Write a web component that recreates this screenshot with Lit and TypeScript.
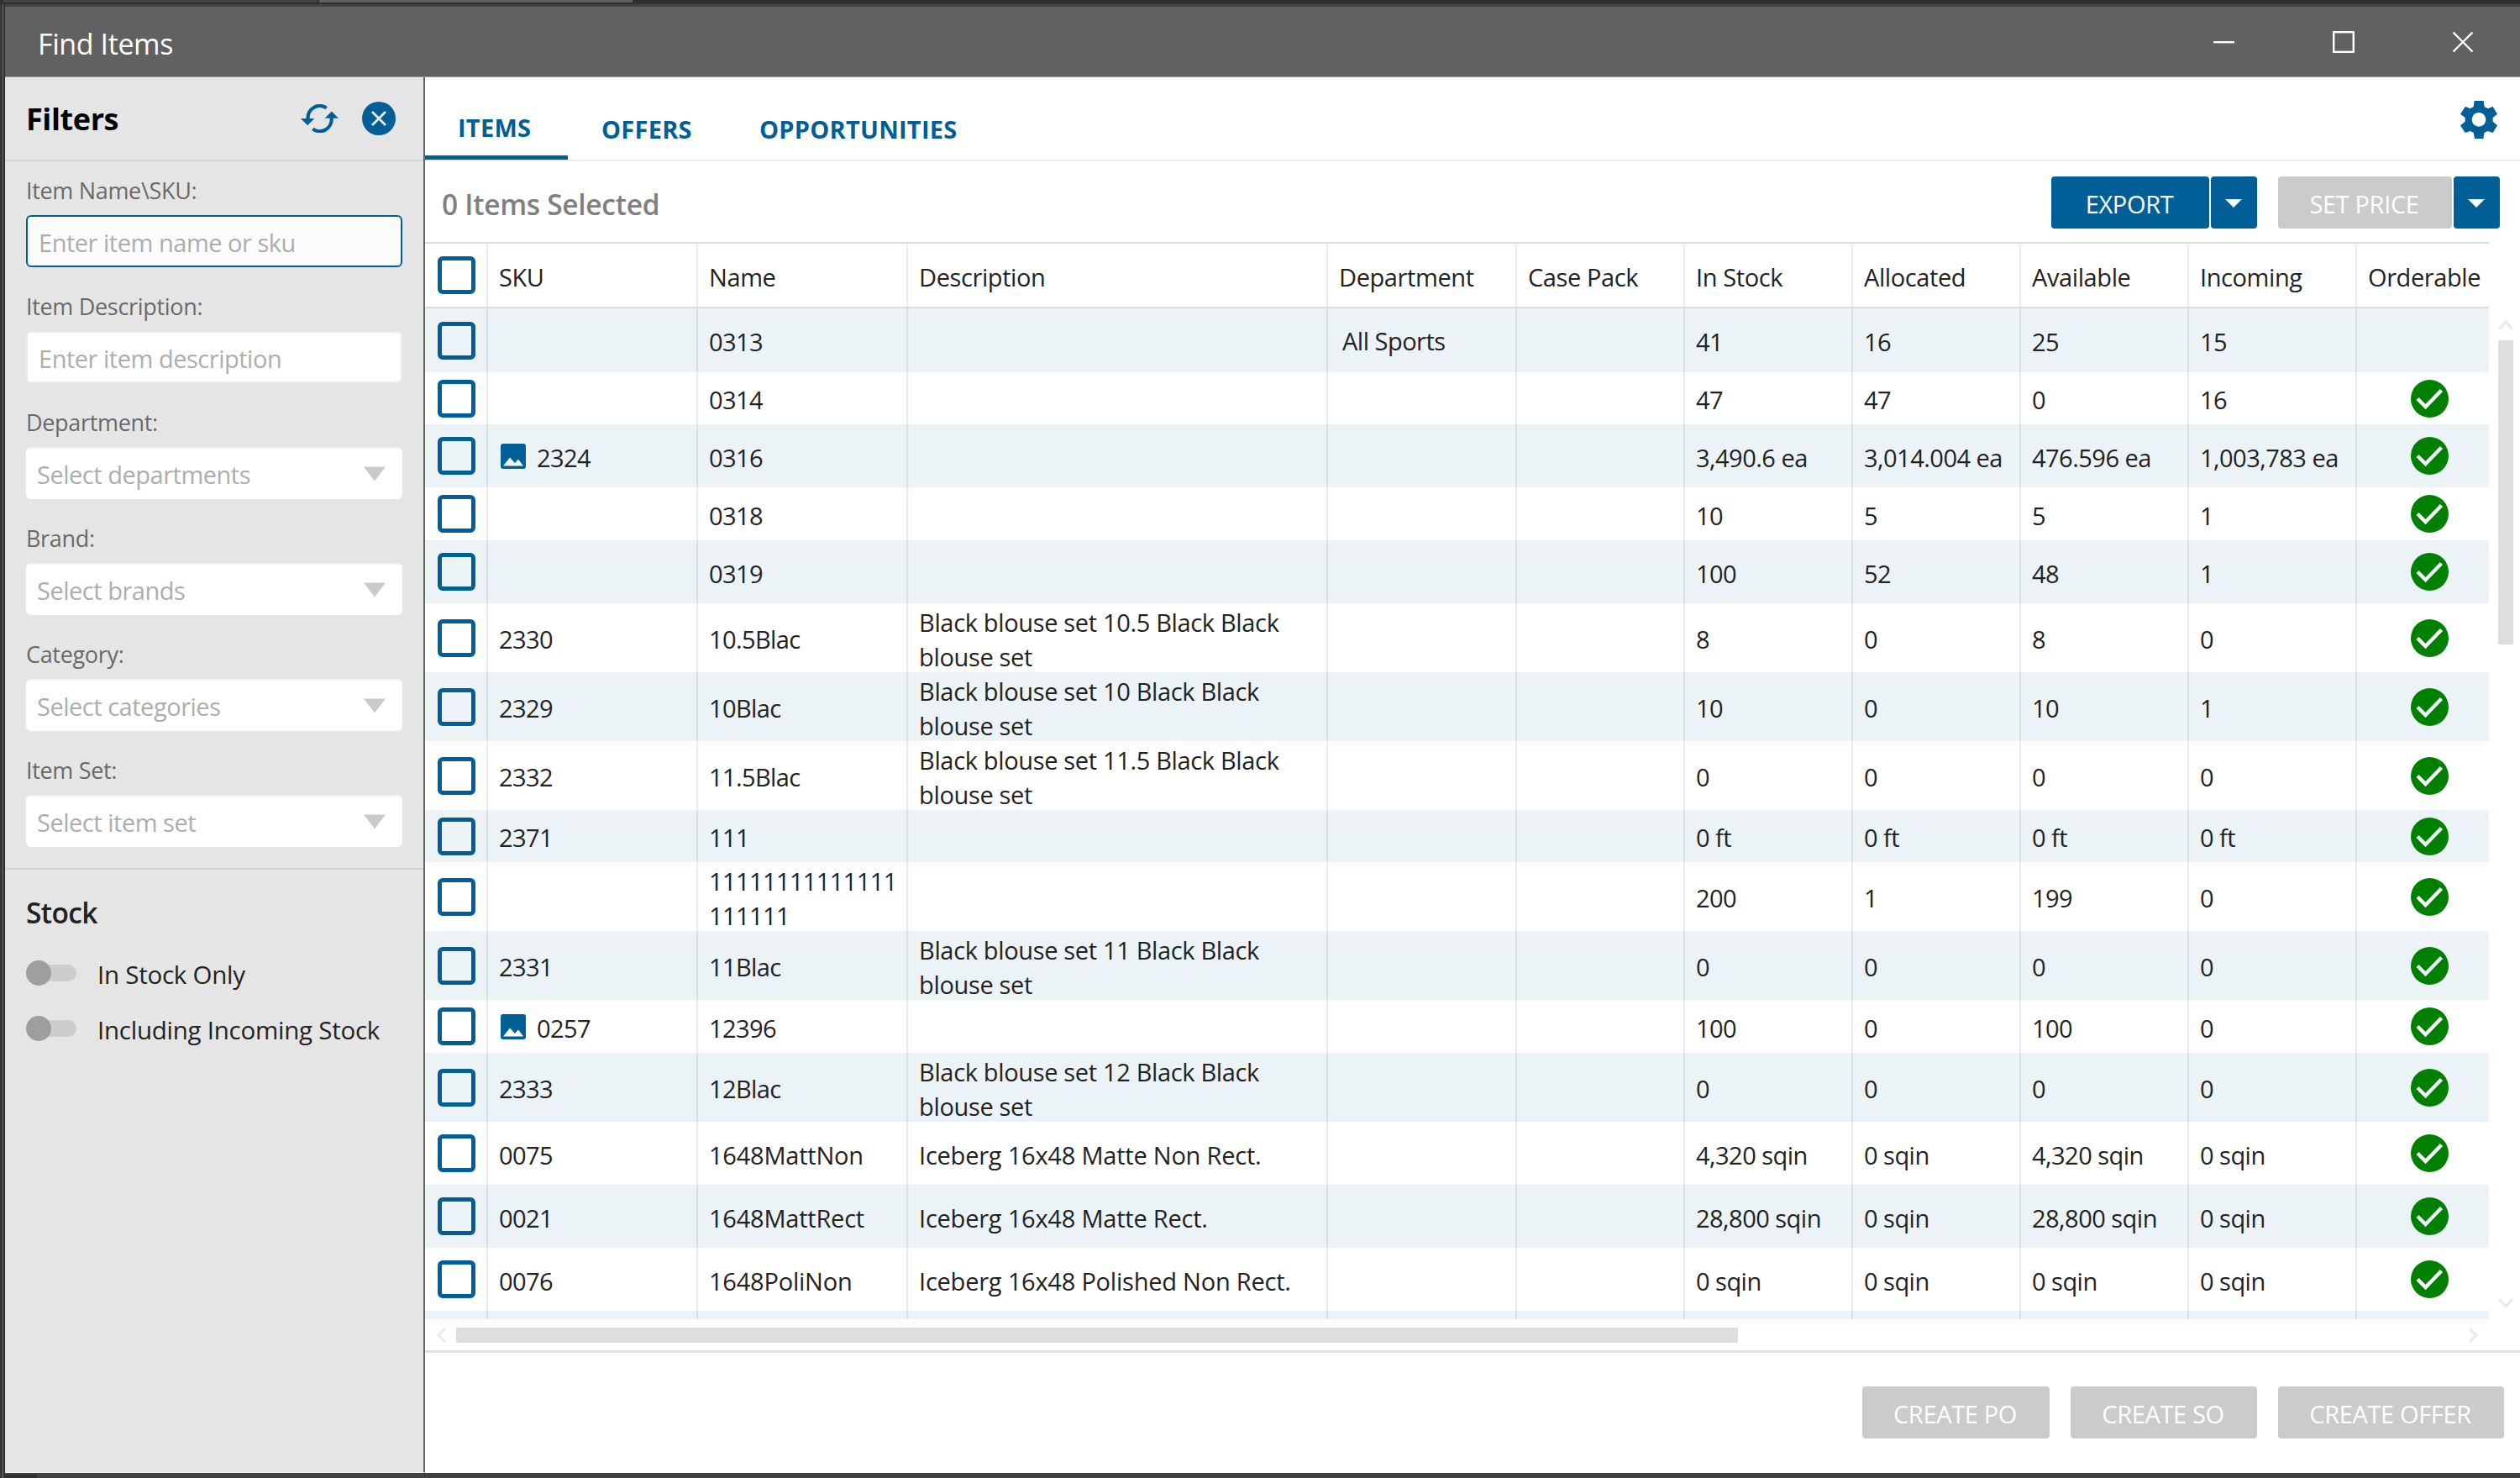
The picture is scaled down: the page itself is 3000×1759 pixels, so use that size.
import { LitElement, html, css, svg, nothing } from "lit";
import { customElement, property } from "lit/decorators.js";

interface Item {
  h: number;
  img?: boolean;
  sku?: string;
  name?: string;
  desc?: string[];
  dept?: string;
  stock?: string[];
  ok?: boolean;
}

const ITEMS: Item[] = [
  { h: 76, name: "0313", dept: "All Sports", stock: ["41", "16", "25", "15"] },
  { h: 62, name: "0314", stock: ["47", "47", "0", "16"], ok: true },
  { h: 75, img: true, sku: "2324", name: "0316", stock: ["3,490.6 ea", "3,014.004 ea", "476.596 ea", "1,003,783 ea"], ok: true },
  { h: 63, name: "0318", stock: ["10", "5", "5", "1"], ok: true },
  { h: 75, name: "0319", stock: ["100", "52", "48", "1"], ok: true },
  { h: 82, sku: "2330", name: "10.5Blac", desc: ["Black blouse set 10.5 Black Black", "blouse set"], stock: ["8", "0", "8", "0"], ok: true },
  { h: 82, sku: "2329", name: "10Blac", desc: ["Black blouse set 10 Black Black", "blouse set"], stock: ["10", "0", "10", "1"], ok: true },
  { h: 82, sku: "2332", name: "11.5Blac", desc: ["Black blouse set 11.5 Black Black", "blouse set"], stock: ["0", "0", "0", "0"], ok: true },
  { h: 62, sku: "2371", name: "111", stock: ["0 ft", "0 ft", "0 ft", "0 ft"], ok: true },
  { h: 82, name: "11111111111111111111", stock: ["200", "1", "199", "0"], ok: true },
  { h: 82, sku: "2331", name: "11Blac", desc: ["Black blouse set 11 Black Black", "blouse set"], stock: ["0", "0", "0", "0"], ok: true },
  { h: 63, img: true, sku: "0257", name: "12396", stock: ["100", "0", "100", "0"], ok: true },
  { h: 82, sku: "2333", name: "12Blac", desc: ["Black blouse set 12 Black Black", "blouse set"], stock: ["0", "0", "0", "0"], ok: true },
  { h: 75, sku: "0075", name: "1648MattNon", desc: ["Iceberg 16x48 Matte Non Rect."], stock: ["4,320 sqin", "0 sqin", "4,320 sqin", "0 sqin"], ok: true },
  { h: 75, sku: "0021", name: "1648MattRect", desc: ["Iceberg 16x48 Matte Rect."], stock: ["28,800 sqin", "0 sqin", "28,800 sqin", "0 sqin"], ok: true },
  { h: 75, sku: "0076", name: "1648PoliNon", desc: ["Iceberg 16x48 Polished Non Rect."], stock: ["0 sqin", "0 sqin", "0 sqin", "0 sqin"], ok: true },
];

const HEADERS = ["SKU", "Name", "Description", "Department", "Case Pack", "In Stock", "Allocated", "Available", "Incoming", "Orderable"];

const chevron = (points: string, w: number, h: number) => html`
  <svg width=${w} height=${h} viewBox="0 0 ${w} ${h}">
    ${svg`<polyline points=${points} fill="none" stroke="#ececec" stroke-width="3.4"/>`}
  </svg>`;

@customElement("filter-panel")
export class FilterPanel extends LitElement {
  static styles = css`
    :host { display: flex; flex-direction: column; width: 498px; flex: none; background: #e5e5e5; border-right: 2px solid #646464; border-bottom: 1px solid #f4f4f4; box-sizing: content-box; }
    .head { display: flex; align-items: center; padding: 0 33px 0 25px; border-bottom: 2px solid #d3d3d3; box-sizing: border-box; height: 100px; flex: none; }
    .title { flex: 1; font-size: 36px; font-weight: 700; color: #000; line-height: 48px; letter-spacing: -0.4px; padding-top: 2px; }
    .head svg { display: block; margin-top: -1px; }
    .refresh { margin-right: 28px; }
    .fields { padding: 17px 25px 0 25px; height: 843px; box-sizing: border-box; border-bottom: 2px solid #d3d3d3; flex: none; }
    .field { height: 138px; }
    .label { font-size: 27px; color: #696969; line-height: 36px; height: 47px; box-sizing: border-box; letter-spacing: -0.32px; }
    .box { height: 62px; box-sizing: border-box; border: 2px solid #ececec; border-radius: 6px; background: #fff; display: flex; align-items: center; padding: 2px 18px 0 13px; color: #adadad; font-size: 29px; letter-spacing: -0.48px; }
    .focused { border: 2px solid #005f96; background: #fcfcfc; }
    .select { border-color: #fff; border-top-color: #f3f3f3; padding-left: 11px; }
    .box span { flex: 1; white-space: pre; }
    .stock { padding: 26px 25px 0; }
    .stock-title { font-size: 33.5px; font-weight: 600; color: #222; line-height: 50px; letter-spacing: -0.6px; }
    .switch { display: flex; align-items: center; height: 66px; gap: 25px; font-size: 29.5px; color: #222; letter-spacing: -0.25px; white-space: nowrap; }
    .switches { padding-top: 14px; }
    .switch span { padding-top: 3px; }
  `;

  private field(label: string, placeholder: string, kind = "") {
    return html`<div class="field">
      <div class="label">${label}</div>
      <div class="box ${kind}">
        <span>${placeholder}</span>
        ${kind === "select" ? html`<svg width="26" height="18" viewBox="0 0 26 18"><path d="M0 .5h26L13 17.5z" fill="#cacaca"/></svg>` : nothing}
      </div>
    </div>`;
  }

  private toggle(label: string) {
    return html`<div class="switch">
      <svg width="60" height="30" viewBox="0 0 60 30"><rect x="8" y="5" width="52" height="20" rx="10" fill="#cdcdcd"/><circle cx="15" cy="15" r="15" fill="#9e9e9e"/></svg>
      <span>${label}</span>
    </div>`;
  }

  render() {
    return html`
      <div class="head">
        <div class="title">Filters</div>
        <svg class="refresh" width="45" height="34" viewBox="55 69 135 102" fill="none" stroke="#005f96" stroke-width="12.5">
          <path d="M147 83A42 43 0 0 0 81 122"/><path d="M98 157A42 43 0 0 0 165 118"/>
          <path d="M55 120h49l-24.500 25z" fill="#005f96" stroke="none"/><path d="M190 119.500h-49l24.500-25z" fill="#005f96" stroke="none"/>
        </svg>
        <svg width="40" height="40" viewBox="0 0 40 40"><circle cx="20" cy="20" r="20" fill="#005f96"/><path d="M12 12l16 16M28 12L12 28" stroke="#e5e5e5" stroke-width="2.9"/></svg>
      </div>
      <div class="fields">
        ${this.field("Item Name\\SKU:", "Enter item name or sku", "focused")}
        ${this.field("Item Description:", "Enter item description")}
        ${this.field("Department:", "Select departments", "select")}
        ${this.field("Brand:", "Select brands", "select")}
        ${this.field("Category:", "Select categories", "select")}
        ${this.field("Item Set:", "Select item set", "select")}
      </div>
      <div class="stock">
        <div class="stock-title">Stock</div>
        <div class="switches">${this.toggle("In Stock Only")}${this.toggle("Including Incoming Stock")}</div>
      </div>`;
  }
}

@customElement("items-table")
export class ItemsTable extends LitElement {
  @property({ attribute: false }) items: Item[] = [];

  static styles = css`
    :host { display: block; width: 2457px; flex: none; overflow: hidden; height: 1282px; }
    .row { display: grid; grid-template-columns: 75px 250px 250px 500px 225px 200px 200px 200px 200px 200px 173px; width: 2473px; color: #222; font-size: 29px; letter-spacing: -0.6px; }
    .header { height: 79px; box-sizing: border-box; border-top: 2px solid #dcdcdc; border-bottom: 2px solid #dcdcdc; background: #fff; letter-spacing: -0.4px; }
    .alt { background: #ebf3f7; }
    .cell { border-right: 2px solid rgba(0, 0, 0, 0.08); padding: 3px 0 0 13px; display: flex; flex-direction: column; justify-content: center; line-height: 41px; white-space: nowrap; box-sizing: border-box; overflow: hidden; }
    .pick { padding: 0 0 0 15px; }
    .checkbox { width: 45px; height: 45px; border: 5px solid #005f96; border-radius: 6px; box-sizing: border-box; }
    .sku { flex-direction: row; align-items: center; justify-content: flex-start; }
    .sku svg { margin: -3px 13px 0 2px; flex: none; }
    .wrap { white-space: normal; overflow-wrap: anywhere; }
    .loose { letter-spacing: -0.22px; }
    .desc { letter-spacing: -0.34px; }
    .stock { letter-spacing: -0.52px; }
    .dept { padding-left: 17px; padding-top: 1px; letter-spacing: -0.5px; }
    .ok { align-items: center; padding: 0; border: 0; }
    .last { border: 0; }
    .filler { height: 10px; }
  `;

  render() {
    return html`
      <div class="row header">
        <div class="cell pick"><div class="checkbox"></div></div>
        ${HEADERS.map((h, i) => html`<div class="cell ${i === 9 ? "last" : ""}">${h}</div>`)}
      </div>
      ${this.items.map((it, i) => {
        const loose = it.desc?.length === 1 ? "loose" : "";
        return html`
        <div class="row ${i % 2 ? "" : "alt"}" style="height:${it.h}px">
          <div class="cell pick"><div class="checkbox"></div></div>
          <div class="cell sku">
            ${it.img ? html`<svg width="30" height="30" viewBox="0 0 30 30"><path fill-rule="evenodd" fill="#005f96" d="M3 0h24a3 3 0 0 1 3 3v24a3 3 0 0 1-3 3H3a3 3 0 0 1-3-3V3a3 3 0 0 1 3-3zM3 26.500h24l-6-8-4 4.500-6-6.500z"/></svg>` : nothing}
            ${it.sku ?? ""}
          </div>
          <div class="cell wrap ${loose}">${it.name ?? ""}</div>
          <div class="cell ${loose || "desc"}">${(it.desc ?? []).map((d) => html`<div>${d}</div>`)}</div>
          <div class="cell dept">${it.dept ?? ""}</div>
          <div class="cell"></div>
          ${(it.stock ?? []).map((s) => html`<div class="cell stock">${s}</div>`)}
          <div class="cell ok">
            ${it.ok ? html`<svg width="45" height="45" viewBox="0 0 45 45"><circle cx="22.5" cy="22.5" r="22.5" fill="#008000"/><path d="M8 22.5l9.5 9.5L36.500 12.5" fill="none" stroke="${i % 2 ? "#fff" : "#ebf3f7"}" stroke-width="4.4"/></svg>` : nothing}
          </div>
        </div>`;
      })}
      <div class="row alt filler">${[0, 1, 2, 3, 4, 5, 6, 7, 8, 9].map(() => html`<div class="cell"></div>`)}</div>`;
  }
}

@customElement("app-root")
export class AppRoot extends LitElement {
  static styles = css`
    :host { display: block; width: 3000px; height: 1759px; overflow: hidden; background: #404040; font-family: "Open Sans", "Noto Sans", sans-serif; box-sizing: border-box; }
    .edge { height: 5px; display: flex; background: #2f2f2f; }
    .edge-a { width: 374px; height: 3px; margin-left: 4px; background: #434343; }
    .edge-b { width: 373px; height: 3px; margin-left: 2px; background: #606060; }
    .frame { display: flex; height: 1754px; }
    .side { width: 6px; flex: none; background: linear-gradient(to right, #383838 0 3px, #707070 3px 4px, #2d2d2d 4px 6px); }
    .window { flex: 1; display: flex; flex-direction: column; height: 1754px; border-top: 3px solid #434343; box-sizing: border-box; }
    .titlebar { height: 84px; flex: none; background: #616161; border-bottom: 1px solid #989898; box-sizing: border-box; display: flex; align-items: center; padding: 0 55px 0 39px; }
    .name { flex: 1; color: #fff; font-size: 34px; letter-spacing: -0.4px; padding-top: 4px; }
    .titlebar svg { display: block; margin-top: 1px; }
    .body { height: 1661px; flex: none; display: flex; }
    .base { height: 6px; display: flex; align-items: flex-end; }
    .base-tab { width: 38px; height: 4px; background: #303030; }
    .main { width: 2494px; background: #fff; display: flex; flex-direction: column; }
    .tabs { height: 100px; box-sizing: border-box; border-bottom: 2px solid #ececec; display: flex; font-size: 29px; font-weight: 700; color: #005f96; letter-spacing: 0.25px; flex: none; }
    .tab { height: 98px; box-sizing: border-box; padding: 42px 0 0 40px; line-height: 40px; width: 188px; }
    .tab.active { width: 170px; padding: 40px 0 0 39px; border-bottom: 5px solid #005f96; }
    .tab.wide { width: 320px; }
    .spacer { flex: 1; }
    .gear { padding: 28px 27px 0 0; }
    .toolbar { height: 96px; box-sizing: border-box; display: flex; align-items: flex-start; padding: 18px 24px 0 20px; flex: none; }
    .count { flex: 1; font-size: 33.5px; font-weight: 600; color: #808080; letter-spacing: -0.3px; line-height: 46px; padding-top: 10px; }
    .btn { height: 62px; border-radius: 4px; background: #005f96; color: #fff; font-size: 29px; letter-spacing: -0.35px; display: flex; align-items: center; justify-content: center; padding: 3px 2px 0 0; box-sizing: border-box; white-space: nowrap; }
    .off { background: #cbcbcb; }
    .export { width: 188px; }
    .price { width: 207px; margin-left: 25px; }
    .drop { width: 55px; margin-left: 2px; padding: 2px 1px 0 0; }
    .grid { display: flex; height: 1282px; flex: none; }
    .vbar { flex: 1; display: flex; flex-direction: column; align-items: center; padding: 92px 0 12px 2px; box-sizing: border-box; }
    .vthumb { width: 18px; height: 362px; background: #dedede; margin-top: 12px; }
    .hbar { height: 40px; box-sizing: border-box; border-bottom: 3px solid #e0e0e0; display: flex; align-items: center; padding: 1px 49px 0 13px; flex: none; }
    .hthumb { width: 1526px; height: 18px; background: #dedede; margin-left: 12px; }
    .footer { flex: 1; display: flex; align-items: flex-start; justify-content: flex-end; gap: 25px; padding: 40px 19px 0 0; }
    .po { width: 223px; }
    .so { width: 222px; }
    .offer { width: 269px; }
  `;

  private caret() {
    return html`<svg width="20" height="10" viewBox="0 0 20 10"><path d="M0 0h20L10 10z" fill="#fff"/></svg>`;
  }

  render() {
    return html`
      <div class="edge"><div class="edge-a"></div><div class="edge-b"></div></div>
      <div class="frame">
        <div class="side"></div>
        <div class="window">
          <div class="titlebar">
            <div class="name">Find Items</div>
            <svg width="311" height="26" viewBox="0 0 311 26" fill="none" stroke="#fff" stroke-width="2.4"><path d="M1 13.2h25"/><rect x="144.2" y="1.2" width="23.6" height="23.6"/><path d="M286.5 1.5l23 23M309.5 1.5l-23 23"/></svg>
          </div>
          <div class="body">
            <filter-panel></filter-panel>
            <div class="main">
              <div class="tabs">
                <div class="tab active">ITEMS</div>
                <div class="tab">OFFERS</div>
                <div class="tab wide">OPPORTUNITIES</div>
                <div class="spacer"></div>
                <div class="gear"><svg width="44" height="45" viewBox="267 60 132 135"><path fill="#005f96" fill-rule="evenodd" d="M317 60H350L353 82Q359 84 365 88L383 80L399 107L383 120V134L399 148L383 174L365 168Q359 171 353 173L349 195H318L314 173Q308 171 302 168L284 174L267 148L284 134V120L267 107L285 80L302 88Q308 84 314 82ZM333 102a25 25 0 1 0 .1 0z"/></svg></div>
              </div>
              <div class="toolbar">
                <div class="count">0 Items Selected</div>
                <div class="btn export">EXPORT</div>
                <div class="btn drop">${this.caret()}</div>
                <div class="btn off price">SET PRICE</div>
                <div class="btn drop">${this.caret()}</div>
              </div>
              <div class="grid">
                <items-table .items=${ITEMS}></items-table>
                <div class="vbar">
                  ${chevron("1,12 9,3 17,12", 18, 13)}
                  <div class="vthumb"></div>
                  <div class="spacer"></div>
                  ${chevron("1,1 9,10 17,1", 18, 13)}
                </div>
              </div>
              <div class="hbar">
                ${chevron("11,1 3,9 11,17", 12, 18)}
                <div class="hthumb"></div>
                <div class="spacer"></div>
                ${chevron("1,1 9,9 1,17", 12, 18)}
              </div>
              <div class="footer">
                <div class="btn off po">CREATE PO</div>
                <div class="btn off so">CREATE SO</div>
                <div class="btn off offer">CREATE OFFER</div>
              </div>
            </div>
          </div>
          <div class="base"><div class="base-tab"></div></div>
        </div>
      </div>`;
  }
}
